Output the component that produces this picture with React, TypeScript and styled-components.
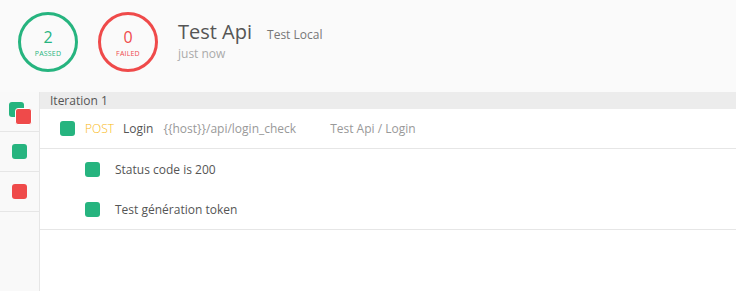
import React from 'react';
import styled, { createGlobalStyle } from 'styled-components';

const GREEN = '#26b47f';
const RED = '#ef4a4a';

const GlobalStyle = createGlobalStyle`
  html, body, #root {
    margin: 0;
    padding: 0;
    height: 100%;
  }
  body {
    font-family: 'Open Sans', 'DejaVu Sans', sans-serif;
    background: #ffffff;
    color: #555555;
  }
`;

const Page = styled.div`
  display: flex;
  flex-direction: column;
  height: 100%;
`;

const Header = styled.header`
  display: flex;
  align-items: flex-start;
  height: 92px;
  box-sizing: border-box;
  padding: 12px 0 0 18px;
  background: #fafafa;
  gap: 20px;
`;

const Circle = styled.div<{ $color: string }>`
  width: 60px;
  height: 60px;
  box-sizing: border-box;
  border: 3px solid ${p => p.$color};
  border-radius: 50%;
  display: flex;
  flex-direction: column;
  align-items: center;
  justify-content: center;
  color: ${p => p.$color};
`;

const Count = styled.span`
  font-size: 16px;
  line-height: 18px;
  margin-top: 2px;
`;

const CountLabel = styled.span`
  font-size: 7px;
  line-height: 10px;
  letter-spacing: 0.2px;
  text-transform: uppercase;
  margin-top: 3px;
`;

const TitleBlock = styled.div`
  display: flex;
  flex-direction: column;
  padding-top: 7px;
`;

const TitleLine = styled.div`
  display: flex;
  align-items: baseline;
  gap: 15px;
`;

const Title = styled.h1`
  margin: 0;
  font-size: 20px;
  font-weight: 400;
  line-height: 26px;
  color: #555555;
`;

const Env = styled.span`
  font-size: 12px;
  color: #777777;
`;

const Time = styled.span`
  font-size: 12px;
  line-height: 18px;
  color: #aaaaaa;
`;

const Body = styled.div`
  display: flex;
  flex: 1;
`;

const Sidebar = styled.aside`
  width: 39px;
  background: #f9f9f9;
  border-right: 1px solid #e6e6e6;
`;

const SideItem = styled.div`
  position: relative;
  height: 39px;
  border-bottom: 1px solid #e6e6e6;
  display: flex;
  align-items: center;
  justify-content: center;
`;

const Square = styled.span<{ $color: string }>`
  display: inline-block;
  flex: none;
  width: 15px;
  height: 15px;
  border-radius: 3px;
  background: ${p => p.$color};
`;

const StackBack = styled(Square)`
  position: absolute;
  left: 9px;
  top: 10px;
`;

const StackFront = styled(Square)`
  position: absolute;
  left: 15px;
  top: 16px;
  border: 1px solid #ffffff;
`;

const Content = styled.main`
  flex: 1;
  display: flex;
  flex-direction: column;
`;

const IterationBar = styled.div`
  height: 17px;
  line-height: 17px;
  padding-left: 10px;
  background: #ececec;
  font-size: 12px;
  color: #555555;
`;

const RequestRow = styled.div`
  display: flex;
  align-items: center;
  height: 39px;
  padding-left: 20px;
  border-bottom: 1px solid #e6e6e6;
  font-size: 12px;
`;

const Method = styled.span`
  margin-left: 10px;
  font-weight: 300;
  color: #f9b815;
`;

const Name = styled.span`
  margin-left: 9px;
  color: #555555;
`;

const Url = styled.span`
  margin-left: 10px;
  color: #999999;
`;

const Path = styled.span`
  margin-left: 34px;
  color: #999999;
`;

const Tests = styled.div`
  border-bottom: 1px solid #e6e6e6;
`;

const TestRow = styled.div`
  display: flex;
  align-items: center;
  gap: 15px;
  height: 40px;
  padding-left: 45px;
  font-size: 12px;
  color: #555555;
`;

const tests = [
  { name: 'Status code is 200', passed: true },
  { name: 'Test génération token', passed: true },
];

export default function App() {
  return (
    <Page>
      <GlobalStyle />
      <Header>
        <Circle $color={GREEN}>
          <Count>2</Count>
          <CountLabel>Passed</CountLabel>
        </Circle>
        <Circle $color={RED}>
          <Count>0</Count>
          <CountLabel>Failed</CountLabel>
        </Circle>
        <TitleBlock>
          <TitleLine>
            <Title>Test Api</Title>
            <Env>Test Local</Env>
          </TitleLine>
          <Time>just now</Time>
        </TitleBlock>
      </Header>
      <Body>
        <Sidebar>
          <SideItem>
            <StackBack $color={GREEN} />
            <StackFront $color={RED} />
          </SideItem>
          <SideItem>
            <Square $color={GREEN} />
          </SideItem>
          <SideItem>
            <Square $color={RED} />
          </SideItem>
        </Sidebar>
        <Content>
          <IterationBar>Iteration 1</IterationBar>
          <RequestRow>
            <Square $color={GREEN} />
            <Method>POST</Method>
            <Name>Login</Name>
            <Url>{'{{host}}/api/login_check'}</Url>
            <Path>Test Api / Login</Path>
          </RequestRow>
          <Tests>
            {tests.map(t => (
              <TestRow key={t.name}>
                <Square $color={t.passed ? GREEN : RED} />
                <span>{t.name}</span>
              </TestRow>
            ))}
          </Tests>
        </Content>
      </Body>
    </Page>
  );
}
